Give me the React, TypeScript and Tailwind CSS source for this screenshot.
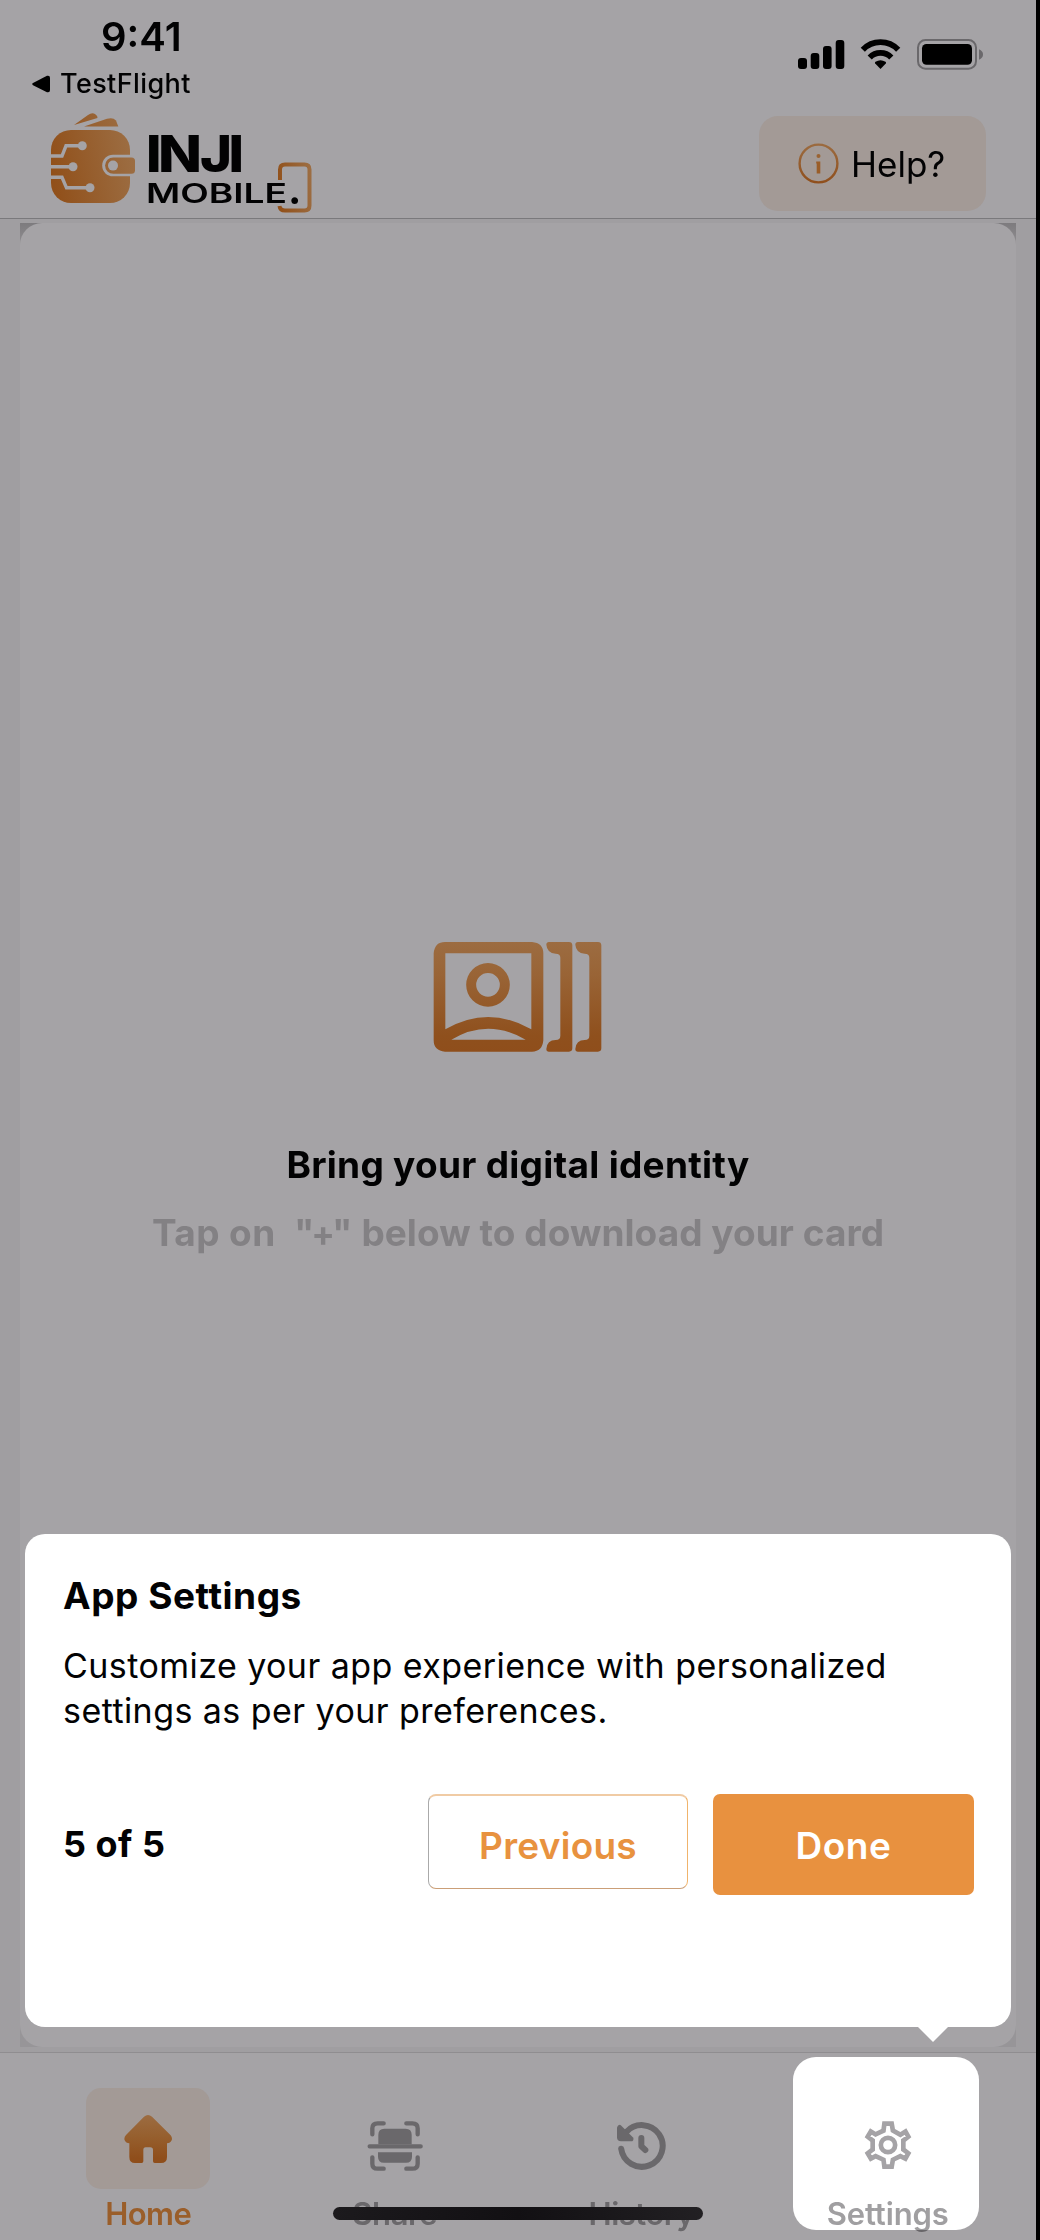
import { type ReactNode } from "react";

function Logo() {
  return (
    <svg className="h-[108px] w-[268px]" viewBox="48 108 268 108" fill="none">
      <defs>
        <linearGradient id="wallet" x1="51" y1="170" x2="132" y2="155" gradientUnits="userSpaceOnUse">
          <stop stopColor="#91501a" />
          <stop offset="1" stopColor="#9c6d42" />
        </linearGradient>
        <linearGradient id="phone" x1="278" y1="190" x2="312" y2="185" gradientUnits="userSpaceOnUse">
          <stop stopColor="#91501a" />
          <stop offset="1" stopColor="#9c6d42" />
        </linearGradient>
      </defs>
      <path d="M74 125 88 115Q92 112 95 114 98 116 97.5 118Z" fill="url(#wallet)" />
      <path d="M84 126.5 107 118.8Q113 117 116 120.5L118.3 126.5Z" fill="url(#wallet)" />
      <rect x="51" y="130" width="79" height="73" rx="20" fill="url(#wallet)" />
      <path d="M51 156H62L66 145.8H80M51 166.8H72M51 177.3H62L66.5 187.8H88" stroke="#a5a3a6" strokeWidth="3.4" />
      <circle cx="82.3" cy="145.8" r="4.5" fill="#a5a3a6" />
      <circle cx="73" cy="166.8" r="4.5" fill="#a5a3a6" />
      <circle cx="90" cy="187.8" r="4.5" fill="#a5a3a6" />
      <path d="M131 154.7H113A10.8 10.8 0 0 0 113 176.3H131Z" fill="#a5a3a6" />
      <path d="M113.3 157.4H131.5Q135 157.4 135 161V170.2Q135 173.8 131.5 173.8H113.3A8.2 8.2 0 0 1 113.3 157.4Z" fill="url(#wallet)" />
      <circle cx="113" cy="165.6" r="5" fill="#a5a3a6" />
      <path d="M280 180V169.500Q280 164.500 285 164.500H304.500Q309.500 164.500 309.500 169.500V205.500Q309.500 210.500 304.500 210.500H285Q280 210.500 279.500 206" stroke="url(#phone)" strokeWidth="4" />
      <text y="172" fill="#020203" className="font-['Inter'] text-[51px] font-extrabold">
        <tspan x="146" textLength="15.500" lengthAdjust="spacingAndGlyphs">I</tspan>
        <tspan x="158" textLength="44" lengthAdjust="spacingAndGlyphs">N</tspan>
        <tspan x="200" textLength="32" lengthAdjust="spacingAndGlyphs">J</tspan>
        <tspan x="228.500" textLength="15.500" lengthAdjust="spacingAndGlyphs">I</tspan>
      </text>
      <text x="146" y="202.600" textLength="141" lengthAdjust="spacingAndGlyphs" fill="#020203" className="font-['Inter'] text-[26.500px] font-semibold">MOBILE</text>
      <text x="288" y="204" fill="#020203" className="font-['Inter'] text-[40px] font-bold">.</text>
    </svg>
  );
}

function StatusIcons() {
  return (
    <svg className="h-[34px] w-[190px]" viewBox="796 37 190 34" fill="none">
      <g fill="#000">
        <rect x="798" y="58" width="9" height="11" rx="3" />
        <rect x="810.700" y="53" width="8.600" height="16" rx="3" />
        <rect x="823" y="46" width="8.600" height="23" rx="3" />
        <rect x="835.700" y="40" width="8.600" height="29" rx="3" />
        <path d="M880.500 69 875.200 63.400Q874.500 62.500 875.500 61.800 880.500 58.600 885.500 61.800 886.500 62.500 885.800 63.400Z" />
      </g>
      <path d="M862.800 49.700A24.500 24.500 0 0 1 898.200 49.700M869.700 57.500A15 15 0 0 1 891.300 57.500" stroke="#000" strokeWidth="5.800" />
      <rect x="918" y="40" width="58" height="28.700" rx="7.500" stroke="#6a686b" strokeWidth="2" />
      <rect x="922" y="44" width="50" height="20.700" rx="4.500" fill="#000" />
      <path d="M979 49.300Q983 51 983 54.500 983 58 979 59.700Z" fill="#6a686b" />
    </svg>
  );
}

function CardsIcon() {
  const bracket =
    "M448 65H508Q518 65 518 75V384Q518 394 508 394H448Q440 394 440 386 442 359 468 359 482 359 482 346V112Q482 100 468 100 442 98 440 73 440 65 448 65Z";
  return (
    <svg className="h-[111.330px] w-[169.330px]" viewBox="100 62 508 334">
      <defs>
        <linearGradient id="cards" x1="0" y1="65" x2="0" y2="394" gradientUnits="userSpaceOnUse">
          <stop stopColor="#9c6c41" />
          <stop offset="0.300" stopColor="#996436" />
          <stop offset="0.850" stopColor="#8f501d" />
          <stop offset="1" stopColor="#8f4e1b" />
        </linearGradient>
      </defs>
      <g fill="url(#cards)">
        <path
          fillRule="evenodd"
          d="M136 65H397Q431 68 431 99V360Q428 394 397 394H136Q102 391 102 360V99Q105 65 136 65ZM137 99V327Q265 253 395 327V99ZM155 358H378Q265 292 155 358Z"
        />
        <path fillRule="evenodd" d="M265 128A65 65 0 1 1 265 259 65 65 0 0 1 265 128ZM265 158A35 35 0 1 0 265 229 35 35 0 0 0 265 158Z" />
        <path d={bracket} />
      </g>
      <g fill="url(#cards)" transform="translate(87 0)">
        <path d={bracket} />
      </g>
    </svg>
  );
}

function HomeIcon() {
  return (
    <svg className="h-[50px] w-[50px]" viewBox="369 401 150 150">
      <defs>
        <linearGradient id="home" x1="0" y1="404" x2="0" y2="548" gradientUnits="userSpaceOnUse">
          <stop stopColor="#9c6c41" />
          <stop offset="0.450" stopColor="#965f2e" />
          <stop offset="0.900" stopColor="#8f4e1b" />
        </linearGradient>
      </defs>
      <path
        fill="url(#home)"
        d="M432 409Q444 399 456 409L512 465Q518 473 515 480 511 489 501 489V530Q501 548 483 548H464Q459 548 459 543V509Q459 501 451 501H437Q430 501 430 509V543Q430 548 425 548H405Q388 548 388 530V489Q378 489 374 480 371 472 378 464Z"
      />
    </svg>
  );
}

function ScanIcon() {
  return (
    <svg className="h-[52px] w-[56px]" viewBox="1102 418 168 156" fill="none" stroke="#6a686b" strokeWidth="13" strokeLinecap="round">
      <path d="M1118 461V443Q1118 428 1134 428H1152M1220 428H1238Q1254 428 1254 443V461M1118 530V549Q1118 564 1134 564H1152M1220 564H1238Q1254 564 1254 549V530M1110 497H1263" />
      <path stroke="none" fill="#6a686b" d="M1136 491V462Q1136 444 1154 444H1218Q1236 444 1236 462V491ZM1135 515H1237V528Q1237 546 1219 546H1153Q1135 546 1135 528Z" />
    </svg>
  );
}

function HistoryIcon() {
  return (
    <svg className="h-[50px] w-[52px]" viewBox="290 422 156 150" fill="none" stroke="#6a686b" strokeWidth="18" strokeLinecap="round" strokeLinejoin="round">
      <path d="M305.500 505A62.500 62.500 0 1 0 321 455M366 473V498L378 509" />
      <path stroke="none" fill="#6a686b" d="M293 441Q298 429 306 436L342 472Q344 483 335 483H305Q293 483 293 471Z" />
    </svg>
  );
}

function GearIcon() {
  const pts =
    "1088,426 1122,426 1126,449 1142,458 1160,447 1175,474 1158,487 1158,507 1175,520 1160,547 1142,538 1126,546 1122,569 1088,569 1085,546 1068,538 1051,547 1035,520 1052,507 1052,487 1035,474 1051,447 1068,457 1085,449";
  return (
    <svg className="h-[50px] w-[48px]" viewBox="1033 422 144 150" fill="none" stroke="#a5a3a6">
      <clipPath id="gear">
        <polygon points={pts} />
      </clipPath>
      <polygon points={pts} strokeWidth="28" clipPath="url(#gear)" />
      <circle cx="1105" cy="497" r="21.500" strokeWidth="14" />
    </svg>
  );
}

function Tab({ label, children, className }: { label: string; children: ReactNode; className: string }) {
  return (
    <div className="relative flex flex-col items-center pt-[35px]">
      {children}
      <span className={"relative mt-[5px] text-[31px] leading-[40px] font-semibold " + className}>{label}</span>
    </div>
  );
}

export default function App() {
  return (
    <div className="flex h-[2240px] w-[1040px] bg-black font-['Inter',sans-serif] text-[#020203]">
      <div className="relative flex w-[1036px] flex-col overflow-hidden bg-[#a5a3a6]">
        <div className="flex h-[104px] items-start justify-between pr-[50px] pl-[32px]">
          <div>
            <div className="pt-[15px] pl-[69px]">
              <span className="block w-fit text-[40px] leading-[44px] font-semibold">9:41</span>
            </div>
            <div className="mt-[4.500px] flex items-center gap-[10px]">
              <svg className="h-[18px] w-[18px]" viewBox="0 0 18 18"><path d="M1 8 15 .8Q18 0 18 3V15Q18 18 15 17.200L1 10.200Q-.6 9 1 8Z" /></svg>
              <span className="text-[27px] leading-[40px] font-medium tracking-[0.400px]">TestFlight</span>
            </div>
          </div>
          <div className="pt-[37px]"><StatusIcons /></div>
        </div>

        <header className="flex h-[115px] items-start justify-between border-b border-[#7a797c] pt-[4px] pr-[50px] pl-[48px]">
          <Logo />
          <button className="mt-[8px] flex h-[95px] w-[227px] items-center gap-[12px] rounded-[19px] bg-[#a39a96] pl-[39px]">
            <svg className="h-[41px] w-[41px]" viewBox="0 0 41 41" fill="none">
              <defs>
                <linearGradient id="info" x1="0" y1="0" x2="0" y2="41" gradientUnits="userSpaceOnUse">
                  <stop stopColor="#9c6c41" />
                  <stop offset="1" stopColor="#8f4e1b" />
                </linearGradient>
              </defs>
              <circle cx="20.500" cy="20.500" r="18.900" stroke="url(#info)" strokeWidth="2.400" />
              <circle cx="20.500" cy="13" r="2" fill="#9a6333" />
              <path d="M18.200 18.500H22.300V30.500H18.700V20.500H18.200Z" fill="#9a5d28" />
            </svg>
            <span className="text-[35px] leading-[44px]">Help?</span>
          </button>
        </header>

        <main className="flex-1 bg-[#a09ea1] px-[20px] pt-[4px] pb-[5px]">
          <div className="h-full bg-linear-to-b from-[#7d7b7e] from-0% via-[#979598] via-[30px] to-[#979598]">
            <div className="flex h-full flex-col items-center rounded-[22px] bg-[#a5a3a6] pt-[718px]">
              <CardsIcon />
              <h1 className="mt-[90.670px] text-[37px] leading-[44px] font-bold tracking-[0.280px]">Bring your digital identity</h1>
              <p className="mt-[24px] text-[37px] leading-[44px] font-bold tracking-[0.050px] whitespace-pre text-[#838184]">
                <span className="tracking-[0.400px]">{"Tap on  "}</span>
                <span className="tracking-[-3px]">{'"'}<span className="text-[35px]">+</span></span>
                {'" below to download your card'}
              </p>
            </div>
          </div>
        </main>

        <nav className="grid h-[188px] grid-cols-4 border-t border-[#8f8d90] px-[25px]">
          <Tab label="Home" className="tracking-[-0.500px] text-[#9a5e2a]">
            <div className="flex h-[101px] w-[124px] items-center justify-center rounded-[15px] bg-[#a39a96]"><HomeIcon /></div>
          </Tab>
          <Tab label="Share" className="tracking-[-0.400px] text-[#a3a2a4] mix-blend-multiply">
            <div className="flex h-[101px] items-center pt-[14px]"><ScanIcon /></div>
          </Tab>
          <Tab label="History" className="tracking-[-0.500px] text-[#a3a2a4] mix-blend-multiply">
            <div className="flex h-[101px] items-center pt-[14px] pl-[2px]"><HistoryIcon /></div>
          </Tab>
          <Tab label="Settings" className="tracking-[-0.100px] text-[#a09fa1] mix-blend-multiply">
            <div className="absolute top-[4px] left-[28.500px] h-[173px] w-[185.500px] rounded-[23px] bg-white" />
            <div className="relative flex h-[101px] items-center pt-[13px]"><GearIcon /></div>
          </Tab>
        </nav>

        <section className="absolute top-[1534px] left-[25px] h-[493px] w-[986px] rounded-[20px] bg-white px-[38px] pt-[40px]">
          <h2 className="w-fit text-[37px] leading-[44px] font-bold tracking-[0.550px]">App Settings</h2>
          <p className="mt-[25px] text-[34px] leading-[45px] tracking-[0.440px]">
            Customize your app experience with personalized
            <br />
            settings as per your preferences.
          </p>
          <div className="mt-[61px] flex items-start">
            <span className="mt-[28px] text-[36px] leading-[44px] font-bold tracking-[0.500px]">5 of 5</span>
            <div className="-mr-[1px] ml-auto flex items-start gap-[25px]">
              <button className="flex h-[95px] w-[260px] items-center justify-center rounded-[8px] border border-t-2 border-t-[#f0cba4] border-r-[#f0b46c] border-b-[#cb9f77] border-l-[#aaa] pt-[8px] text-[#e8923f]">
                <span className="text-[37px] leading-[44px] font-semibold tracking-[0.250px]">Previous</span>
              </button>
              <button className="flex h-[101px] w-[261px] items-center justify-center rounded-[7px] bg-[#e8913f] pt-[2px] text-white">
                <span className="text-[37px] leading-[44px] font-semibold tracking-[0.500px]">Done</span>
              </button>
            </div>
          </div>
          <div className="absolute top-[493px] left-[893px] h-0 w-0 border-x-[15px] border-t-[15px] border-x-transparent border-t-white" />
        </section>

        <div className="absolute top-[2207px] left-[333px] h-[13px] w-[370px] rounded-full bg-linear-to-r from-[#1c1a1d] via-[#121013] to-[#222023]" />
      </div>
    </div>
  );
}
